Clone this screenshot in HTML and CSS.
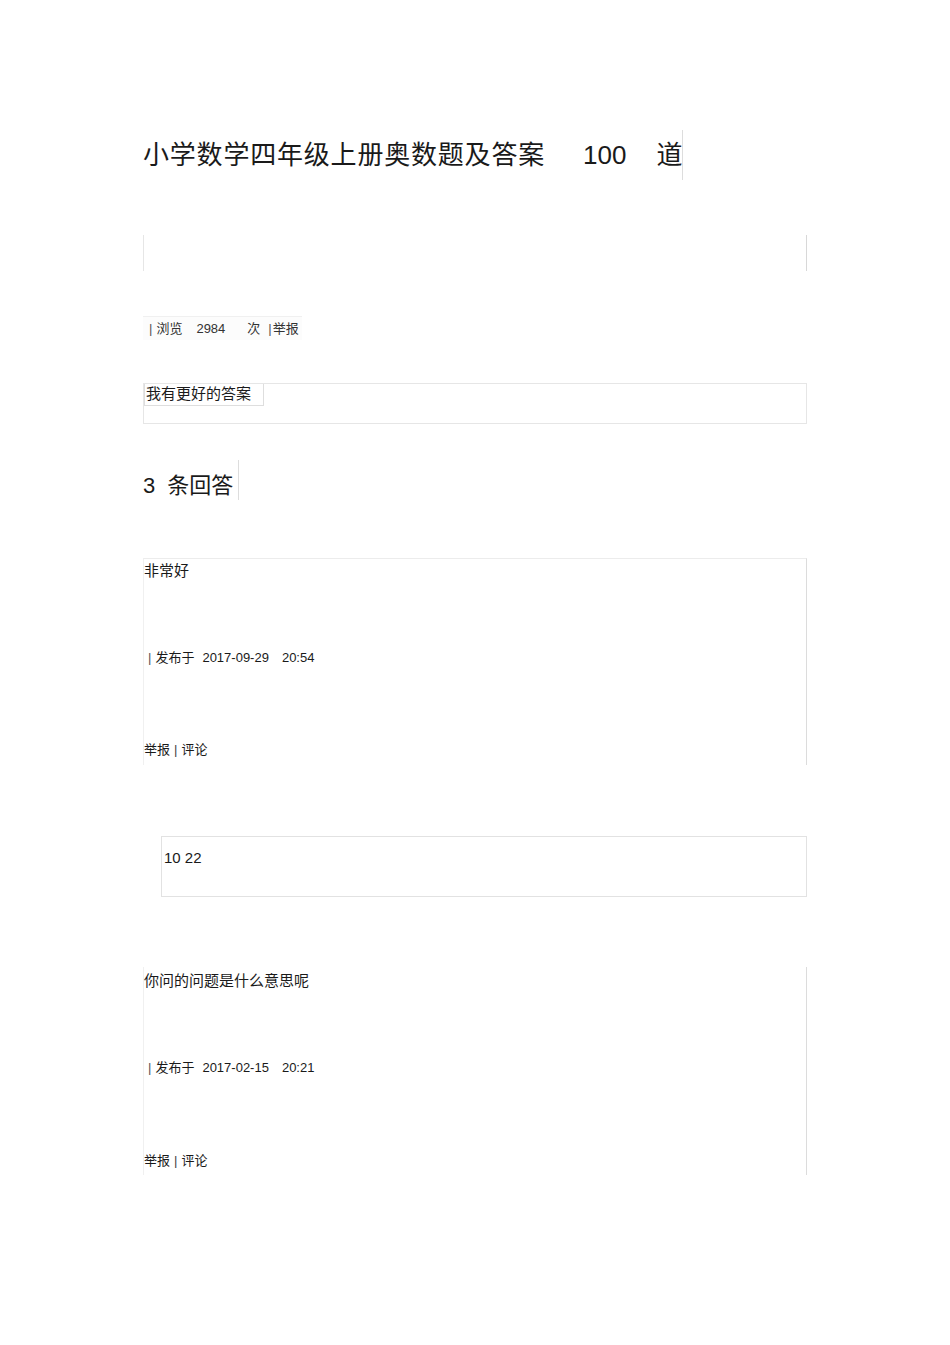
FILE: index.html
```html
<!DOCTYPE html>
<html lang="zh-CN">
<head>
    <meta charset="UTF-8">
    <title>小学数学四年级上册奥数题及答案100道</title>
    <link rel="stylesheet" href="styles.css">
</head>
<body>
    <div class="page">
        <div class="title-row">
            <h1 class="title">小学数学四年级上册奥数题及答案<span class="num">100</span><span class="unit">道</span></h1>
        </div>
        <div class="blank-box"></div>
        <div class="stats-row">
            <span class="stats"><span class="bar">|</span>浏览<span class="count">2984</span>次<span class="bar bar-tight">|</span>举报</span>
        </div>
        <div class="answer-form">
            <span class="answer-btn">我有更好的答案</span>
        </div>
        <div class="count-row">
            <h2 class="answer-count"><span class="num">3</span>条回答</h2>
        </div>

        <div class="answer">
            <p class="answer-text">非常好</p>
            <div class="meta"><span class="bar">|</span>发布于<span class="date">2017-09-29</span><span class="time">20:54</span></div>
            <div class="actions">举报<span class="sep">|</span>评论</div>
        </div>

        <div class="comment">10 22</div>

        <div class="answer answer-last">
            <p class="answer-text">你问的问题是什么意思呢</p>
            <div class="meta"><span class="bar">|</span>发布于<span class="date">2017-02-15</span><span class="time">20:21</span></div>
            <div class="actions">举报<span class="sep">|</span>评论</div>
        </div>
    </div>
</body>
</html>
```

FILE: styles.css
```css
body {
    margin: 0;
    padding: 0;
    background: #fff;
    color: #1a1a1a;
    font-family: 'Liberation Sans', 'Noto Sans CJK SC', sans-serif;
}
.page {
    width: 664px;
    margin-left: 143px;
    padding-top: 130px;
    padding-bottom: 170px;
}
.title-row {
    height: 50px;
}
.title {
    display: inline-block;
    margin: 0;
    height: 50px;
    line-height: 50px;
    font-size: 26px;
    font-weight: 400;
    letter-spacing: 0.8px;
    border-right: 1px solid #ddd;
}
.title .num {
    margin-left: 38px;
    letter-spacing: 0;
}
.title .unit {
    margin-left: 30px;
    letter-spacing: 0;
}
.blank-box {
    margin-top: 55px;
    height: 36px;
    border-left: 1px solid #e6e6e6;
    border-right: 1px solid #d8d8d8;
}
.stats-row {
    margin-top: 45px;
    height: 24px;
}
.stats {
    display: inline-block;
    height: 24px;
    line-height: 24px;
    padding-right: 3px;
    font-size: 13px;
    color: #333;
    background: #fcfcfc;
    border-top: 1px solid #f0f0f0;
    box-sizing: border-box;
}
.bar {
    margin-left: 6px;
    margin-right: 4px;
    color: #555;
}
.bar-tight {
    margin-left: 8px;
    margin-right: 1px;
}
.count {
    margin-left: 14px;
    margin-right: 22px;
}
.answer-form {
    margin-top: 43px;
    height: 41px;
    border: 1px solid #e6e6e6;
    box-sizing: border-box;
}
.answer-btn {
    display: inline-block;
    height: 22px;
    line-height: 20px;
    padding: 0 12px 0 1px;
    font-size: 15px;
    border: 1px solid #dedede;
    border-top: 0;
    box-sizing: border-box;
}
.count-row {
    margin-top: 36px;
    height: 40px;
}
.answer-count {
    display: inline-block;
    margin: 0;
    height: 40px;
    line-height: 52px;
    padding-right: 5px;
    font-size: 22px;
    font-weight: 400;
    border-right: 1px solid #ddd;
}
.answer-count .num {
    margin-right: 12px;
}
.answer {
    margin-top: 58px;
    height: 207px;
    border-top: 1px solid #ececec;
    border-left: 1px solid #f0f0f0;
    border-right: 1px solid #dcdcdc;
    box-sizing: border-box;
}
.answer-last {
    margin-top: 70px;
    height: 208px;
    border-top: 0;
}
.answer-text {
    margin: 0;
    height: 24px;
    line-height: 24px;
    font-size: 15px;
}
.answer-last .answer-text {
    line-height: 28px;
}
.meta {
    margin-top: 65px;
    height: 20px;
    line-height: 20px;
    font-size: 13px;
}
.answer-last .meta {
    margin-top: 67px;
}
.meta .bar {
    margin-left: 4px;
    margin-right: 4px;
}
.date {
    margin-left: 8px;
}
.time {
    margin-left: 13px;
}
.actions {
    margin-top: 72px;
    height: 20px;
    line-height: 20px;
    font-size: 13px;
}
.answer-last .actions {
    margin-top: 73px;
}
.sep {
    margin: 0 4px;
    color: #444;
}
.comment {
    margin-top: 71px;
    margin-left: 18px;
    height: 61px;
    line-height: 42px;
    padding-left: 2px;
    font-size: 15px;
    border: 1px solid #e2e2e2;
    box-sizing: border-box;
}
```
